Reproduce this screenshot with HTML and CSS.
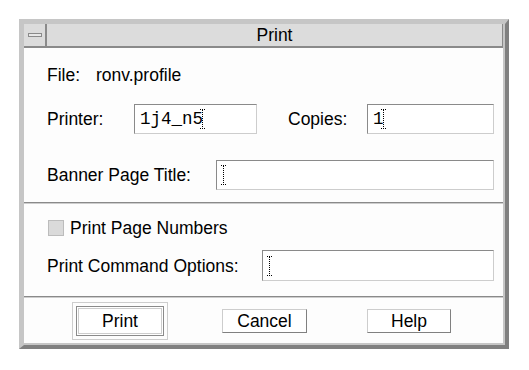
FILE: index.html
```html
<!DOCTYPE html>
<html lang="en">

<head>
  <meta charset="UTF-8">
  <meta name="viewport" content="width=device-width, initial-scale=1.0">
  <title>Print</title>
  <link rel="stylesheet" href="styles.css">
</head>

<body>
  <div class="window">
    <div class="frame">
      <header class="titlebar">
        <span class="close-box"><span class="close-bar"></span></span>
        <h1 class="title">Print</h1>
      </header>

      <!-- file + printer -->
      <section class="panel panel-top">
        <div class="row file-row">
          <span class="label file-label">File:</span>
          <span>ronv.profile</span>
        </div>
        <div class="row field-row printer-row">
          <label class="label printer-label" for="printer">Printer:</label>
          <div class="field printer-field" id="printer">
            <span class="field-text">1j4_n5</span>
            <svg class="caret" width="5" height="20" viewBox="0 0 5 20">
              <path d="M0 0.5h5M0 19.5h5M2.5 1v18" stroke="#000" stroke-dasharray="1 1" fill="none"/>
            </svg>
          </div>
          <label class="label copies-label" for="copies">Copies:</label>
          <div class="field copies-field" id="copies">
            <span class="field-text">1</span>
            <svg class="caret" width="5" height="20" viewBox="0 0 5 20">
              <path d="M0 0.5h5M0 19.5h5M2.5 1v18" stroke="#000" stroke-dasharray="1 1" fill="none"/>
            </svg>
          </div>
        </div>
        <div class="row field-row banner-row">
          <label class="label banner-label" for="banner">Banner Page Title:</label>
          <div class="field grow-field" id="banner">
            <svg class="caret" width="5" height="20" viewBox="0 0 5 20">
              <path d="M0 0.5h5M0 19.5h5M2.5 1v18" stroke="#000" stroke-dasharray="1 1" fill="none"/>
            </svg>
          </div>
        </div>
      </section>

      <div class="separator"></div>

      <!-- options -->
      <section class="panel panel-middle">
        <div class="row check-row">
          <span class="checkbox"></span>
          <span>Print Page Numbers</span>
        </div>
        <div class="row field-row options-row">
          <label class="label options-label" for="options">Print Command Options:</label>
          <div class="field grow-field" id="options">
            <svg class="caret" width="5" height="20" viewBox="0 0 5 20">
              <path d="M0 0.5h5M0 19.5h5M2.5 1v18" stroke="#000" stroke-dasharray="1 1" fill="none"/>
            </svg>
          </div>
        </div>
      </section>

      <div class="separator"></div>

      <!-- actions -->
      <footer class="actions">
        <span class="default-ring"><button class="btn btn-default">Print</button></span>
        <button class="btn btn-cancel">Cancel</button>
        <button class="btn btn-help">Help</button>
      </footer>
    </div>
  </div>
</body>

</html>
```

FILE: styles.css
```css
*,
*::before,
*::after {
  box-sizing: border-box;
  margin: 0;
  padding: 0;
}

:root {
  /* COLORS */
  --page-white: #ffffff;
  --panel-white: #fdfdfd;
  --frame-light: #c6c6c6;
  --frame-dark: #808080;
  --title-gray: #dcdcdc;
  --line-dark: #8a8a8a;
  --line-light: #cdcdcd;
  --text-black: #000000;

  /* FONTS */
  --ff-ui: "Liberation Sans", Arial, sans-serif;
  --ff-mono: "Liberation Mono", "Courier New", monospace;
}

body {
  min-height: 100vh;
  background-color: var(--page-white);
  font-family: var(--ff-ui);
  font-size: 17.5px;
  line-height: 20px;
  color: var(--text-black);
}

.window {
  width: 490px;
  margin: 19px 0 0 19px;

  border-style: solid;
  border-width: 5px 4px 4px 5px;
  border-color: var(--frame-light) var(--frame-dark) var(--frame-dark) var(--frame-light);
}

.frame {
  display: flex;
  flex-direction: column;

  background-color: var(--panel-white);
  border-right: 2px solid var(--frame-light);
  border-bottom: 2px solid var(--frame-light);
}

/* title bar */
.titlebar {
  display: flex;
  align-items: center;

  height: 24px;
  background-color: var(--title-gray);
  border-bottom: 2px solid var(--line-dark);
  border-right: 1px solid var(--line-dark);
}

.close-box {
  display: grid;
  place-items: center;

  width: 23px;
  height: 100%;
  border-right: 2px solid var(--line-dark);
}

.close-bar {
  width: 14px;
  height: 4px;
  border: 1px solid var(--line-dark);
  background-color: #e8e8e8;
}

.title {
  flex: 1;

  font-size: 17.5px;
  font-weight: normal;
  text-align: center;
}

/* panels */
.panel {
  display: flex;
  flex-direction: column;

  padding-left: 23px;
  padding-right: 9px;
}

.panel-top {
  height: 154px;
  padding-top: 17px;
}

.panel-middle {
  height: 92px;
  padding-top: 14px;
}

.row {
  display: flex;
  align-items: center;
  height: 20px;
}

.field-row {
  height: 30px;
}

.printer-row {
  margin-top: 19px;
}

.banner-row {
  margin-top: 26px;
}

.options-row {
  height: 31px;
  margin-top: 12px;
}

.label {
  flex-shrink: 0;
}

.file-label {
  width: 49px;
}

.printer-label {
  width: 87px;
}

.copies-label {
  width: 79px;
  margin-left: 31px;
}

.banner-label {
  width: 169px;
}

.options-label {
  width: 215px;
}

/* text fields */
.field {
  display: flex;
  align-items: center;

  height: 100%;
  padding-left: 4px;

  background-color: var(--page-white);
  border: 1px solid;
  border-color: var(--line-dark) var(--line-light) var(--line-light) var(--line-dark);
}

.printer-field {
  width: 123px;
  padding-left: 5px;
}

.copies-field {
  flex: 1;
  padding-left: 5px;
}

.grow-field {
  flex: 1;
}

.field-text {
  font-family: var(--ff-mono);
  font-size: 17.5px;
}

.field-text + .caret {
  margin-left: -3px;
}

.caret {
  display: block;
  flex-shrink: 0;
}

/* checkbox */
.check-row {
  gap: 6px;
  padding-left: 1px;
}

.checkbox {
  width: 16px;
  height: 16px;

  background-color: #dadada;
  border: 1px solid #bcbcbc;
}

.separator {
  height: 2px;
  border-top: 1px solid var(--line-dark);
  border-bottom: 1px solid var(--line-light);
}

/* buttons */
.actions {
  display: flex;
  align-items: center;

  height: 45px;
  padding-left: 48px;
  padding-top: 1px;
}

.btn {
  width: 85px;
  height: 24px;

  font-family: var(--ff-ui);
  font-size: 17.5px;
  color: var(--text-black);

  background-color: var(--page-white);
  border: 1px solid;
  border-color: var(--line-light) var(--frame-dark) var(--frame-dark) var(--line-light);
}

.default-ring {
  display: block;
  padding: 3px;
  border: 1px solid var(--line-light);
}

.btn-default {
  display: block;
  width: 88px;
  height: 30px;

  border: 1px solid var(--line-dark);
  box-shadow: inset 0 0 0 1px var(--page-white), inset 0 0 0 2px var(--line-light);
}

.btn-cancel {
  margin-left: 54px;
}

.btn-help {
  width: 84px;
  margin-left: 60px;
}
```
